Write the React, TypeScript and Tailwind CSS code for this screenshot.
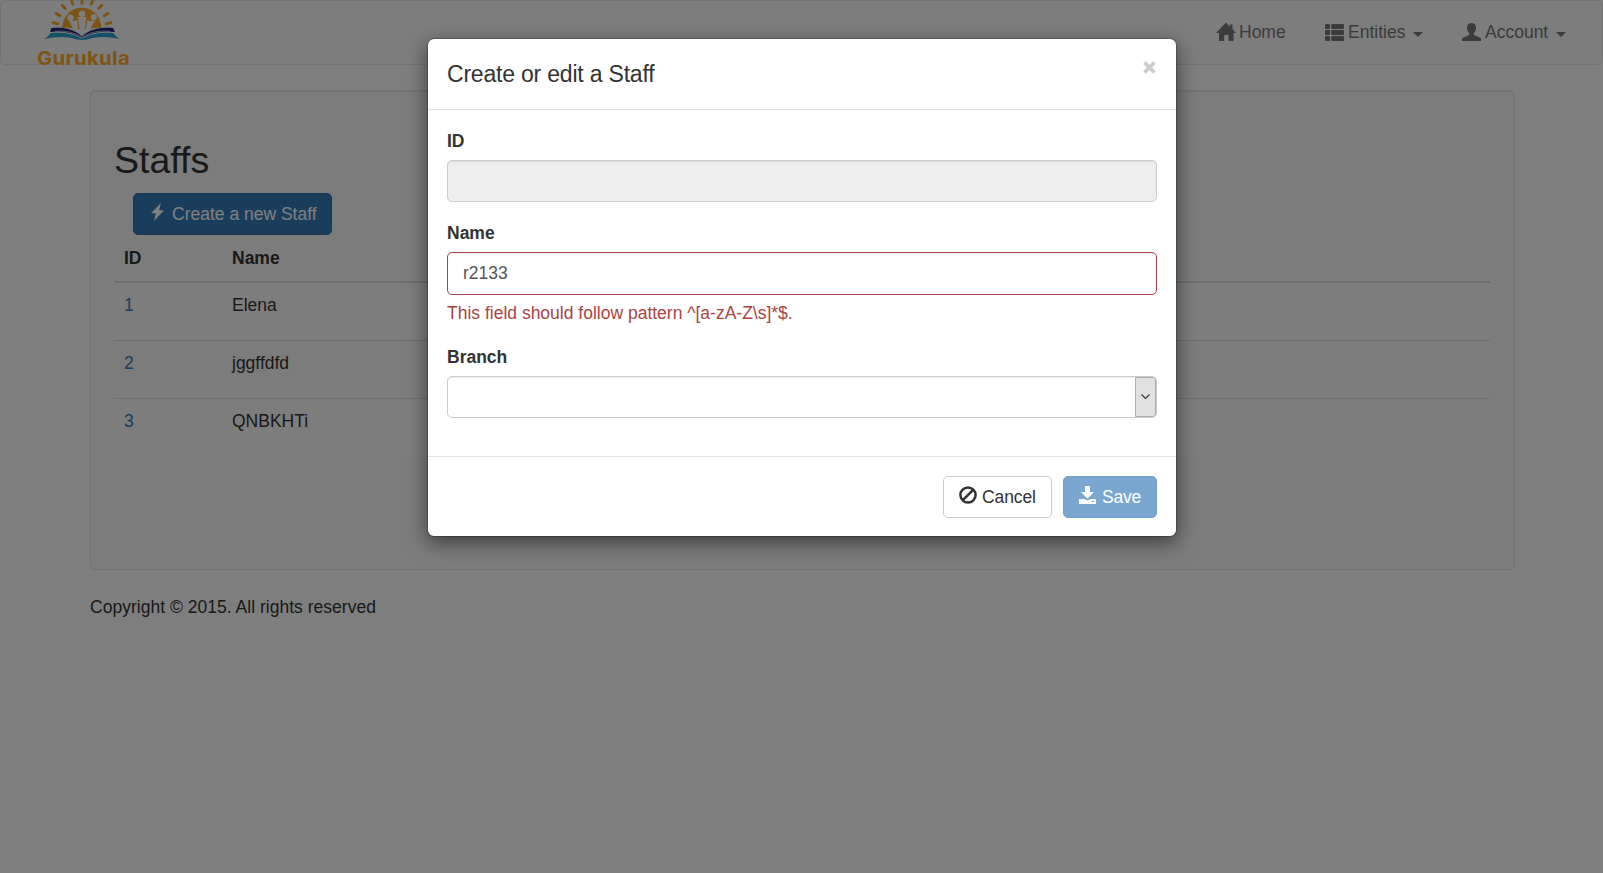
import type { ReactNode } from "react";

function HomeIcon() {
  return (
    <svg className="mt-[21px] -mr-px h-[19px] w-5 shrink-0" viewBox="0 0 20 19" fill="currentColor">
      <path d="M10 .6 14 4.700V2.600h2.500v4.700L20 11h-2.500v8h-5v-6H8.200v6H3v-8H0z" />
    </svg>
  );
}

function ListIcon() {
  return (
    <svg className="mt-[22px] h-[18px] w-[19px] shrink-0" viewBox="0 0 19 18" fill="currentColor">
      {[1, 7, 13].map((y) => (
        <g key={y}>
          <rect x="0" y={y} width="5" height="5" rx="1" />
          <rect x="6.2" y={y} width="12.8" height="5" rx="1" />
        </g>
      ))}
    </svg>
  );
}

function UserIcon() {
  return (
    <svg className="mt-[22px] h-[18px] w-[19px] shrink-0" viewBox="0 0 19 18" fill="currentColor">
      <path d="M9.500 0c2.800 0 4.500 1.700 4.500 4.200 0 2.200-.600 4.200-1.900 5.500-.8 1-.6 2 .4 2.500l5.100 2.400c.9.400 1.400.9 1.400 1.700V18H0v-1.700c0-.8.500-1.300 1.400-1.700l5.100-2.400c1-.500 1.200-1.500.4-2.500C5.600 8.400 5 6.400 5 4.200 5 1.700 6.700 0 9.500 0z" />
    </svg>
  );
}

function Caret() {
  return (
    <svg className="mt-[31px] ml-2 h-[5px] w-[10px] shrink-0" viewBox="0 0 10 5" fill="currentColor">
      <path d="M0 0h10L5 5z" />
    </svg>
  );
}

function BoltIcon() {
  return (
    <svg className="-ml-px mt-[-4px] mr-[8px] h-[18px] w-[13px] shrink-0" viewBox="0 0 13 18" fill="currentColor">
      <path d="M10 0 0 10.200h4.900L3 18 13 7.300H8z" />
    </svg>
  );
}

function BanIcon() {
  return (
    <svg className="mt-[9px] mr-[5px] h-[18px] w-[18px] shrink-0" viewBox="0 0 18 18" fill="none" stroke="currentColor" strokeWidth="2.500">
      <circle cx="9" cy="9" r="7.600" />
      <path d="M3.800 14.200 14.200 3.800" />
    </svg>
  );
}

function SaveIcon() {
  return (
    <svg className="mt-[9px] mr-[6px] h-[18px] w-[17px] shrink-0" viewBox="0 0 17 18" fill="currentColor">
      <path d="M6 0h5v6h4L8.500 12.800 2 6h4z" />
      <path fillRule="evenodd" d="M0 13h5.500l3 1.500 3-1.500H17v5H0zM13 15v1h2v-1z" />
    </svg>
  );
}

function Logo() {
  return (
    <svg className="ml-[37px] h-[76px] w-[94px] shrink-0" viewBox="37 0 94 76">
      <path fill="#fba928" d="M62 27.500C63 16 71 7.800 82 7.800S100.500 16 101.500 27.500L98 29H66z" />
      <g stroke="#fba928" strokeWidth="2.800" strokeLinecap="round">
        <path d="M82 0v3.500M71.500 1.200l1.300 2.800M92.500 1.200l-1.300 2.800M62.200 5.300l3 3.200M101.800 5.300l-3 3.200M56 13.500l4 2.200M108 13.500l-4 2.200M53 22.600l5 1.200M111 22.600l-5 1.200" />
      </g>
      <path fill="#fafafa" d="M69 20.500 74.500 21l3-4h9l3 4 5.500-.500-4.500 8.500H73z" />
      <path fill="#fba928" d="M62 27.500 66.500 21l5.500 8-6 1zM101.500 27.500 97 21l-5 8 6 1zM74 20l3-2.500.5 3zM90 20l-3-2.500-.5 3z" />
      <path d="M77.500 18l1.300 11M86.700 18l-1.400 11" stroke="#fba928" strokeWidth="1.200" />
      <g fill="#fafafa">
        <circle cx="82" cy="13.700" r="3.200" />
        <circle cx="70.500" cy="17.700" r="3.100" />
        <circle cx="93.800" cy="17.200" r="3.100" />
      </g>
      <path fill="#fafafa" d="M60 28.500C70 26.500 77 29 82 35c5-6 12-8.500 22-6.500v3l-22 6-22-6z" />
      <path fill="#23277f" d="M51.500 28C64 27 73 29 82 36.200 91 29 100 27 113 28l2 4c-13-1.600-23 .5-33 5.800-10-5.300-20-7.400-32-5.800z" />
      <path fill="none" stroke="#fafafa" strokeWidth=".6" d="M55 31.400c11-1 19 1 27 5.800 8-5 16-6.800 28-5.800" />
      <path fill="#2ba2cc" d="M44 39c3-1.500 5-4 7-6 12-1.200 22 .5 31 5.500 9-5 19-6.700 31-5.500 2 2 4 4.500 7 6-12-2.500-22-3-32 .3-2 .8-10 .8-12 0-10-3.300-20-2.800-32-.3z" />
      <text x="37" y="65" textLength="93" lengthAdjust="spacingAndGlyphs" fill="#fba928" className="font-['Inter'] text-[19px] font-bold tracking-[0.3px]">Gurukula</text>
    </svg>
  );
}

function NavItem({ icon, label, caret, className }: { icon: ReactNode; label: string; caret?: boolean; className: string }) {
  return (
    <a className={`flex h-16 items-start text-[#777] ${className}`}>
      {icon}
      <span className="mt-[19px] ml-[4px]">{label}</span>
      {caret && <Caret />}
    </a>
  );
}

const staffs = [
  { id: 1, name: "Elena" },
  { id: 2, name: "jggffdfd" },
  { id: 3, name: "QNBKHTi" },
];

function Page() {
  return (
    <div className="h-[873px] bg-[#fdfdfd]">
      <nav className="flex h-[65px] justify-between rounded-[5px] border border-[#e7e7e7] bg-[#fafafa]">
        <div className="-mt-px -ml-px">
          <Logo />
        </div>
        <div className="flex">
          <NavItem icon={<HomeIcon />} label="Home" className="w-[109px]" />
          <NavItem icon={<ListIcon />} label="Entities" caret className="w-[137px]" />
          <NavItem icon={<UserIcon />} label="Account" caret className="w-[140px]" />
        </div>
      </nav>
      <main className="mt-[25px] mr-[88px] ml-[90px] h-[480px] rounded-[5px] border border-[#e3e3e3] bg-[#f8f8f8] px-[23px] pt-[48px] shadow-[inset_0_1px_1px_rgba(0,0,0,0.05)]">
        <h2 className="h-[54px] pt-px text-[37.5px] leading-[41px]">Staffs</h2>
        <button className="ml-[19px] flex h-[42px] w-[199px] items-center rounded-[5px] border border-[#2e6da4] bg-[#337ab7] pl-[18px] text-white">
          <BoltIcon />
          <span>Create a new Staff</span>
        </button>
        <table className="w-[1376px] table-fixed border-collapse text-left">
          <thead>
            <tr className="h-[47px] border-b-2 border-[#ddd] align-top">
              <th className="w-[108px] pt-[11px] pl-[10px]">ID</th>
              <th className="pt-[11px] pl-[10px]">Name</th>
            </tr>
          </thead>
          <tbody>
            {staffs.map((s) => (
              <tr key={s.id} className="h-[58px] border-t border-[#ddd] align-top odd:bg-[#fbfbfb]">
                <td className="pt-[10px] pl-[10px] text-[#337ab7]">{s.id}</td>
                <td className="pt-[10px] pl-[10px]">{s.name}</td>
              </tr>
            ))}
          </tbody>
        </table>
      </main>
      <p className="mt-[25px] ml-[90px] tracking-[0.02px]">Copyright © 2015. All rights reserved</p>
    </div>
  );
}

function Modal() {
  return (
    <div className="mt-[38px] ml-[427px] h-[499px] w-[750px] rounded-[7px] border border-black/20 bg-white bg-clip-padding shadow-[0_6px_19px_rgba(0,0,0,0.5)]">
      <div className="flex h-[71px] justify-between border-b border-[#e5e5e5] px-[19px]">
        <h4 className="mt-[19px] text-[23px] leading-[32px] tracking-[-0.2px]">Create or edit a Staff</h4>
        <svg className="mt-[22px] mr-px h-[13px] w-[13px]" viewBox="0 0 13 13" stroke="#ccc" strokeWidth="3.600">
          <path d="M1.500 1.500l10 10M11.500 1.500l-10 10" />
        </svg>
      </div>
      <div className="h-[347px] border-b border-[#e5e5e5] px-[19px] pt-[19px]">
        <label className="block h-[31px] font-bold">ID</label>
        <div className="h-[42px] rounded-[5px] border border-[#ccc] bg-[#eee] shadow-[inset_0_1px_1px_rgba(0,0,0,0.075)]" />
        <label className="mt-[19px] block h-[31px] font-bold">Name</label>
        <div className="h-[43px] rounded-[5px] border border-[#a94442] px-[15px] pt-[8px] text-[#555] shadow-[inset_0_1px_1px_rgba(0,0,0,0.075)]">r2133</div>
        <p className="mt-[6px] text-[#a94442]">This field should follow pattern ^[a-zA-Z\s]*$.</p>
        <label className="mt-[19px] block h-[31px] font-bold">Branch</label>
        <div className="flex h-[42px] justify-end overflow-hidden rounded-[5px] border border-[#ccc] shadow-[inset_0_1px_1px_rgba(0,0,0,0.075)]">
          <div className="flex w-[21px] items-center justify-center rounded-r-[3px] border border-[#adadad] bg-[#e1e1e1]">
            <svg className="h-[6px] w-[9px]" viewBox="0 0 9 6" fill="none" stroke="#333" strokeWidth="1.100">
              <path d="M.5.500l4 4 4-4" />
            </svg>
          </div>
        </div>
      </div>
      <div className="flex justify-end gap-[11px] px-[19px] pt-[19px]">
        <button className="flex h-[42px] w-[109px] items-start rounded-[5px] border border-[#ccc] bg-white pl-[15px]">
          <BanIcon />
          <span className="mt-[8px] tracking-[-0.1px]">Cancel</span>
        </button>
        <button className="flex h-[42px] w-[94px] items-start rounded-[5px] border border-[#739fc8] bg-[#7aa7d0] pl-[15px] text-white">
          <SaveIcon />
          <span className="mt-[8px] tracking-[-0.2px]">Save</span>
        </button>
      </div>
    </div>
  );
}

export default function App() {
  return (
    <div className="relative h-[873px] w-full overflow-hidden font-['Liberation_Sans',Arial,sans-serif] text-[17.5px] leading-[25px] text-[#333]">
      <Page />
      <div className="absolute inset-0 flex items-start bg-black/50">
        <Modal />
      </div>
    </div>
  );
}
